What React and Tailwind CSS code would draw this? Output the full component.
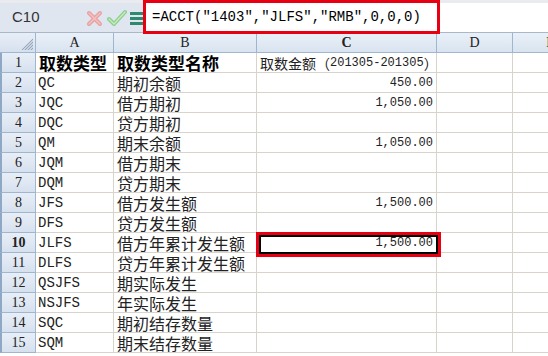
import React from "react";

const rows = [
  ["QC", "期初余额", "450.00"],
  ["JQC", "借方期初", "1,050.00"],
  ["DQC", "贷方期初", ""],
  ["QM", "期末余额", "1,050.00"],
  ["JQM", "借方期末", ""],
  ["DQM", "贷方期末", ""],
  ["JFS", "借方发生额", "1,500.00"],
  ["DFS", "贷方发生额", ""],
  ["JLFS", "借方年累计发生额", "1,500.00"],
  ["DLFS", "贷方年累计发生额", ""],
  ["QSJFS", "期实际发生", ""],
  ["NSJFS", "年实际发生", ""],
  ["SQC", "期初结存数量", ""],
  ["SQM", "期末结存数量", ""],
];

const cjk = { fontFamily: '"Noto Sans CJK SC", sans-serif' };
const mono = { fontFamily: '"Liberation Mono", "Noto Sans CJK SC", monospace' };
const serif = { fontFamily: '"Liberation Serif", "Noto Sans CJK SC", serif' };

const COLS = "grid grid-cols-[36px_78px_143px_180px_76px_76px]";

function RowHead({ n, bold }) {
  return (
    <div
      className={`h-5 border-r border-b border-[#9eb6ce] bg-gradient-to-b from-[#e8eef7] to-[#d6e1ee] border-l-2 border-l-[#8fa8c6] flex items-center justify-center text-[14px] leading-none text-[#222] ${bold ? "font-bold" : ""}`}
      style={serif}
    >
      {n}
    </div>
  );
}

function Cell({ children, className = "" }) {
  return (
    <div className={`h-5 border-r border-b border-[#d8d4cc] bg-white flex items-center leading-none overflow-hidden whitespace-nowrap ${className}`}>
      {children}
    </div>
  );
}

export default function App() {
  return (
    <div className="relative w-[548px] h-[356px] overflow-hidden bg-white">
      {/* formula bar */}
      <div className="h-[33px] bg-[#dfe6ef] border-t-[3px] border-[#e9ebee] border-b border-b-[#a9b8c9] flex items-center">
        <div className="w-[86px] pl-3 text-[15px] text-[#333]" style={{ fontFamily: '"Liberation Sans", sans-serif' }}>
          C10
        </div>
        <div className="flex items-center gap-[3px] w-[57px]">
          <svg width="18" height="18" viewBox="0 0 18 18">
            <path d="M3 4 L14 15 M14 4 L3 15" stroke="#e8a0a0" strokeWidth="4" strokeLinecap="round" />
            <path d="M3 4 L14 15 M14 4 L3 15" stroke="#f3c1c1" strokeWidth="1.5" strokeLinecap="round" />
          </svg>
          <svg width="20" height="18" viewBox="0 0 20 18">
            <path d="M2 10 L7 15 L18 3" fill="none" stroke="#8ecf8e" strokeWidth="4" strokeLinecap="round" strokeLinejoin="round" />
            <path d="M2 10 L7 15 L18 3" fill="none" stroke="#c4ecc4" strokeWidth="1.3" strokeLinecap="round" strokeLinejoin="round" />
          </svg>
          <svg width="13" height="16" viewBox="0 0 13 16">
            <rect x="0" y="2" width="13" height="3" fill="#2d8a6e" />
            <rect x="0" y="7" width="13" height="3" fill="#2d8a6e" />
            <rect x="0" y="12" width="13" height="3" fill="#2d8a6e" />
          </svg>
        </div>
        <div className="flex-1 h-full bg-white border-l border-[#b8c4d2] flex items-center pl-2 text-[14px] text-black" style={mono}>
          =ACCT("1403","JLFS","RMB",0,0,0)
        </div>
      </div>

      {/* column headers */}
      <div className={COLS}>
        <div className="h-5 border-r border-b border-[#9eb6ce] bg-gradient-to-b from-[#e8eef7] to-[#d6e1ee] relative">
          <svg className="absolute right-[2px] bottom-[2px]" width="12" height="12" viewBox="0 0 12 12">
            <path d="M12 0 L12 12 L0 12 Z" fill="#c9d4e2" />
            <path d="M4 12 L12 4 M7 12 L12 7 M10 12 L12 10 M1 12 L12 1" stroke="#8a9bb0" strokeWidth="0.8" />
          </svg>
        </div>
        {["A", "B", "C", "D", "E"].map((c) => (
          <div
            key={c}
            className={`h-5 border-r border-b border-[#9eb6ce] bg-gradient-to-b from-[#eaf0f8] to-[#d9e4f0] flex items-center justify-center text-[14px] leading-none text-[#222] ${c === "C" ? "font-bold" : ""}`}
            style={serif}
          >
            {c}
          </div>
        ))}
      </div>

      {/* row 1 */}
      <div className={COLS}>
        <RowHead n={1} />
        <Cell className="pl-[3px] text-[17px] font-bold text-black">
          <span style={cjk}>取数类型</span>
        </Cell>
        <Cell className="pl-[3px] text-[17px] font-bold text-black">
          <span style={cjk}>取数类型名称</span>
        </Cell>
        <Cell className="pl-[3px] text-[14px] text-[#222]">
          <span style={cjk}>取数金额（</span>
          <span className="text-[12px]" style={mono}>201305-201305</span>
          <span style={cjk}>）</span>
        </Cell>
        <Cell />
        <Cell />
      </div>

      {rows.map((r, i) => {
        const n = i + 2;
        const sel = n === 10;
        return (
          <div key={n} className={COLS}>
            <RowHead n={n} bold={sel} />
            <Cell className="pl-[2px] text-[14px] text-[#222]">
              <span style={mono}>{r[0]}</span>
            </Cell>
            <Cell className="pl-[3px] text-[16px] text-[#222]">
              <span style={cjk}>{r[1]}</span>
            </Cell>
            <Cell className="justify-end pr-[3px] text-[12px] text-[#222]">
              <span style={mono}>{r[2]}</span>
            </Cell>
            <Cell />
            <Cell />
          </div>
        );
      })}

      {/* annotation boxes */}
      <div className="absolute left-[143px] top-0 w-[297px] h-[34px] border-[3px] border-[#e60012]" />
      <div className="absolute left-[256px] top-[232px] w-[185px] h-[25px] border-[3px] border-[#e60012]">
        <div className="w-full h-full border-2 border-black" />
      </div>
    </div>
  );
}
